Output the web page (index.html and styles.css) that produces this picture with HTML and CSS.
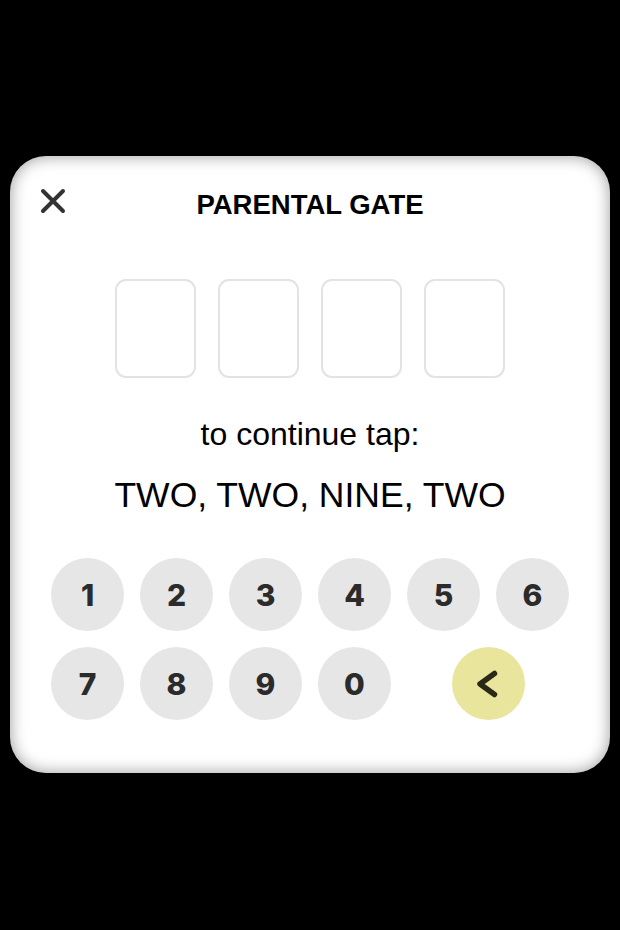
FILE: index.html
```html
<!DOCTYPE html>
<html lang="en">
<head>
<meta charset="utf-8">
<title>Parental Gate</title>
<link rel="stylesheet" href="styles.css">
</head>
<body>
<div class="card">
  <div class="header">
    <button class="close" aria-label="Close">
      <svg width="26" height="26" viewBox="0 0 26 26"><path d="M3 3 L23 23 M23 3 L3 23" stroke="#333" stroke-width="4" stroke-linecap="round" fill="none"/></svg>
    </button>
    <h1 class="title">PARENTAL GATE</h1>
    <span></span>
  </div>
  <div class="boxes">
    <div class="box"></div>
    <div class="box"></div>
    <div class="box"></div>
    <div class="box"></div>
  </div>
  <p class="prompt">to continue tap:</p>
  <p class="code">TWO, TWO, NINE, TWO</p>
  <div class="keypad">
    <button class="key">1</button>
    <button class="key">2</button>
    <button class="key">3</button>
    <button class="key">4</button>
    <button class="key">5</button>
    <button class="key">6</button>
    <button class="key">7</button>
    <button class="key">8</button>
    <button class="key">9</button>
    <button class="key">0</button>
    <button class="key back" aria-label="Backspace">
      <svg width="30" height="30" viewBox="0 0 30 30"><path d="M21.5 4.5 L7 15 L21.5 25.5" stroke="#2a2817" stroke-width="5.5" stroke-linecap="round" stroke-linejoin="round" fill="none"/></svg>
    </button>
  </div>
</div>
</body>
</html>
```
FILE: styles.css
```css
html, body {
  margin: 0;
  padding: 0;
  background: #000;
}
body {
  width: 620px;
  height: 930px;
  overflow: hidden;
  font-family: "Liberation Sans", Arial, sans-serif;
}
.card {
  margin: 156px 10px 0;
  height: 617px;
  box-sizing: border-box;
  border-radius: 36px;
  background: #fff;
  box-shadow: inset 0 0 16px rgba(0, 0, 0, 0.4);
  display: flex;
  flex-direction: column;
  align-items: center;
  padding-top: 34px;
}
.header {
  width: 100%;
  display: grid;
  grid-template-columns: 1fr auto 1fr;
  align-items: start;
}
.close {
  justify-self: start;
  margin: -2px 0 0 30px;
  padding: 0;
  border: 0;
  background: none;
  width: 26px;
  height: 26px;
  display: flex;
}
.title {
  margin: 0;
  font-size: 27.5px;
  font-weight: 700;
  line-height: 30px;
  color: #000;
}
.boxes {
  margin-top: 59px;
  display: flex;
  gap: 22px;
}
.box {
  width: 81px;
  height: 99px;
  box-sizing: border-box;
  border: 2px solid #e3e3e3;
  border-radius: 11px;
}
.prompt {
  margin: 38px 0 0;
  font-size: 32px;
  line-height: 37px;
  color: #000;
}
.code {
  margin: 22px 0 0;
  font-size: 35.5px;
  line-height: 40px;
  color: #000;
}
.keypad {
  margin-top: 43px;
  display: grid;
  grid-template-columns: repeat(6, 73px);
  gap: 16px;
}
.key {
  width: 73px;
  height: 73px;
  border-radius: 50%;
  border: 0;
  padding: 0;
  background: #e6e6e6;
  color: #2b2b2b;
  font-family: Inter, "Noto Sans", sans-serif;
  font-weight: 800;
  font-size: 30px;
  display: flex;
  align-items: center;
  justify-content: center;
}
.back {
  grid-column: 5 / span 2;
  justify-self: center;
  background: #e9e59d;
}
```
